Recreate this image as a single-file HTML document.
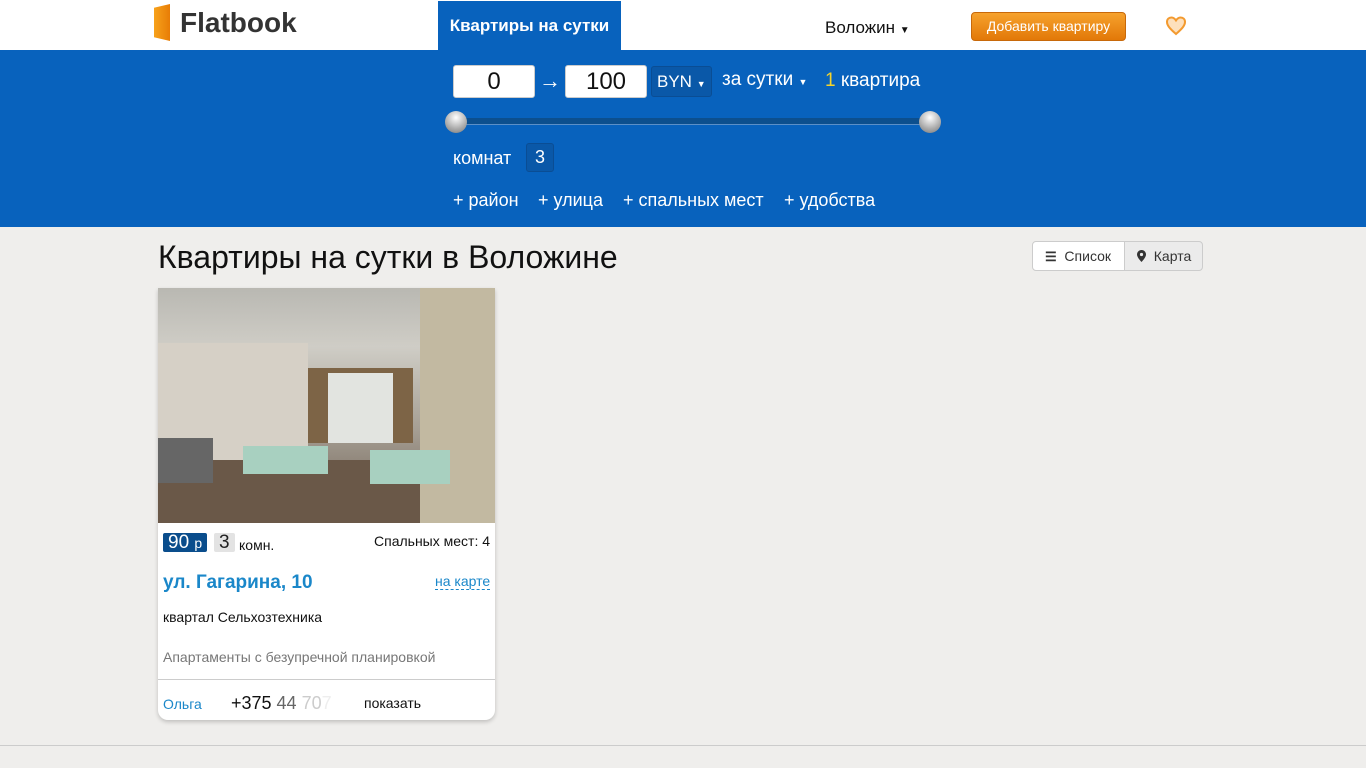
<!DOCTYPE html>
<html><head><meta charset="utf-8"><style>
*{box-sizing:border-box}
body{margin:0;width:1366px;height:768px;overflow:hidden;background:#efeeec;font-family:"Liberation Sans",sans-serif;position:relative}
.abs{position:absolute}
.hdr{top:0;left:0;width:1366px;height:50px;background:#fff}
.blue{top:50px;left:0;width:1366px;height:177px;background:#0862bd}
.inp{background:#fff;border:1px solid #ccc;border-radius:3px;height:33px;font-size:24px;text-align:center;line-height:31px;color:#111}
.w{color:#fff}
</style></head><body>
<div class="abs hdr"></div>
<div class="abs" style="left:154px;top:4px;width:16px;height:37px;background:linear-gradient(90deg,#f7a21b,#e87d06);clip-path:polygon(0 10%,100% 0,100% 100%,0 90%)"></div>
<div class="abs" style="left:180px;top:8px;font-size:28px;line-height:30px;font-weight:bold;color:#333">Flatbook</div>
<div class="abs" style="left:438px;top:1px;width:183px;height:49px;background:#0862bd;color:#fff;font-weight:bold;font-size:17px;text-align:center;line-height:49px">Квартиры на сутки</div>
<div class="abs" style="left:825px;top:18px;font-size:17px;color:#111">Воложин <span style="font-size:10px">▼</span></div>
<div class="abs" style="left:971px;top:12px;width:155px;height:29px;border-radius:4px;background:linear-gradient(#f6a22d,#e27808);border:1px solid #c8690a;color:#fff;font-size:14px;text-align:center;line-height:27px">Добавить квартиру</div>
<svg class="abs" style="left:1165px;top:16px" width="22" height="20" viewBox="0 0 22 20"><path d="M11 18 C4 12 2 9 2 6 C2 3 4 1.5 6.5 1.5 C8.5 1.5 10 3 11 4.5 C12 3 13.5 1.5 15.5 1.5 C18 1.5 20 3 20 6 C20 9 18 12 11 18Z" fill="#fde0bd" stroke="#f39a2f" stroke-width="2"/></svg>
<div class="abs blue"></div>
<div class="abs inp" style="left:453px;top:65px;width:82px">0</div>
<div class="abs w" style="left:539px;top:68px;font-size:22px">→</div>
<div class="abs inp" style="left:565px;top:65px;width:82px">100</div>
<div class="abs" style="left:651px;top:66px;width:61px;height:31px;background:#0a58a8;border:1px solid #0a4d94;border-radius:3px;color:#fff;font-size:17px;line-height:29px;padding-left:5px">BYN <span style="font-size:9px">▼</span></div>
<div class="abs w" style="left:722px;top:69px;font-size:19px">за сутки <span style="font-size:9px">▼</span></div>
<div class="abs w" style="left:825px;top:70px;font-size:19px"><span style="color:#f5d42a">1</span> квартира</div>
<div class="abs" style="left:456px;top:118px;width:475px;height:7px;background:#0c4f8e;border-radius:3px;border-bottom:1px solid #5b8fc7"></div>
<div class="abs" style="left:445px;top:111px;width:22px;height:22px;border-radius:50%;background:radial-gradient(circle at 50% 30%,#fff,#aaa 60%,#777)"></div>
<div class="abs" style="left:919px;top:111px;width:22px;height:22px;border-radius:50%;background:radial-gradient(circle at 50% 30%,#fff,#aaa 60%,#777)"></div>
<div class="abs w" style="left:453px;top:148px;font-size:18px">комнат</div>
<div class="abs w" style="left:526px;top:143px;width:28px;height:29px;background:#0a58a8;border:1px solid #0a4d94;border-radius:3px;text-align:center;line-height:27px;font-size:18px">3</div>
<div class="abs w" style="left:453px;top:190px;font-size:18px">+ район</div>
<div class="abs w" style="left:538px;top:190px;font-size:18px">+ улица</div>
<div class="abs w" style="left:623px;top:190px;font-size:18px">+ спальных мест</div>
<div class="abs w" style="left:784px;top:190px;font-size:18px">+ удобства</div>
<div class="abs" style="left:158px;top:239px;font-size:32px;color:#111">Квартиры на сутки в Воложине</div>
<div class="abs" style="left:1032px;top:241px;width:93px;height:30px;background:#fff;border:1px solid #ccc;border-radius:4px 0 0 4px;font-size:14px;line-height:28px;padding-left:12px;color:#333"><b style="font-size:13px">☰</b>&nbsp; Список</div>
<div class="abs" style="left:1124px;top:241px;width:79px;height:30px;background:#ebebeb;border:1px solid #ccc;border-radius:0 4px 4px 0;font-size:14px;line-height:28px;padding-left:12px;color:#333"><svg width="9" height="12" viewBox="0 0 9 12" style="vertical-align:-1px"><path d="M4.5 0C2 0 0 2 0 4.5C0 7.5 4.5 12 4.5 12S9 7.5 9 4.5C9 2 7 0 4.5 0Z" fill="#333"/><circle cx="4.5" cy="4.5" r="1.6" fill="#ebebeb"/></svg>&nbsp; Карта</div>
<div class="abs" style="left:158px;top:288px;width:337px;height:432px;background:#fff;border-radius:0 0 10px 10px;box-shadow:0 2px 4px rgba(0,0,0,.2);overflow:hidden">
 <div style="position:relative;height:235px;background:linear-gradient(180deg,#b9b8b2 0,#cfcdc6 25%,#a69f94 60%,#6b5c50 100%)">
  <div class="abs" style="left:0;top:55px;width:150px;height:120px;background:#d6d0c6"></div>
  <div class="abs" style="left:150px;top:80px;width:105px;height:75px;background:#7d6446"></div>
  <div class="abs" style="left:170px;top:85px;width:65px;height:70px;background:#e2e4e0"></div>
  <div class="abs" style="left:262px;top:0;width:75px;height:235px;background:#c2b9a1"></div>
  <div class="abs" style="left:0;top:172px;width:262px;height:63px;background:#6a5848"></div>
  <div class="abs" style="left:85px;top:158px;width:85px;height:28px;background:#a8d0c0"></div>
  <div class="abs" style="left:212px;top:162px;width:80px;height:34px;background:#a8d0c0"></div>
  <div class="abs" style="left:0;top:150px;width:55px;height:45px;background:#666"></div>
 </div>
 <div class="abs" style="left:5px;top:245px;background:#0a4d8c;color:#fff;font-size:19px;padding:0 5px;height:19px;line-height:19px;border-radius:2px">90 <span style="font-size:14px">р</span></div>
 <div class="abs" style="left:56px;top:245px;background:#e3e3e3;color:#222;font-size:19px;padding:0 5px;height:19px;line-height:19px;border-radius:2px">3</div>
 <div class="abs" style="left:81px;top:249px;font-size:14px;color:#111">комн.</div>
 <div class="abs" style="left:216px;top:245px;font-size:14px;color:#111">Спальных мест: 4</div>
 <div class="abs" style="left:5px;top:284px;font-size:19px;font-weight:bold;color:#1a87c9">ул. Гагарина, 10</div>
 <div class="abs" style="left:277px;top:285px;font-size:14px;color:#1a87c9;border-bottom:1px dashed #1a87c9">на карте</div>
 <div class="abs" style="left:5px;top:321px;font-size:14px;color:#111">квартал Сельхозтехника</div>
 <div class="abs" style="left:5px;top:361px;font-size:14px;color:#777">Апартаменты с безупречной планировкой</div>
 <div class="abs" style="left:0;top:391px;width:337px;height:1px;background:#ccc"></div>
 <div class="abs" style="left:5px;top:408px;font-size:14px;color:#1a87c9">Ольга</div>
 <div class="abs" style="left:73px;top:405px;font-size:18px;color:#111">+375 <span style="color:#666">44</span> <span style="color:#ccc">70</span><span style="color:#eee">7</span></div>
 <div class="abs" style="left:206px;top:407px;font-size:14px;color:#111">показать</div>
</div>
<div class="abs" style="left:0;top:745px;width:1366px;height:1px;background:#ccc"></div>
</body></html>
